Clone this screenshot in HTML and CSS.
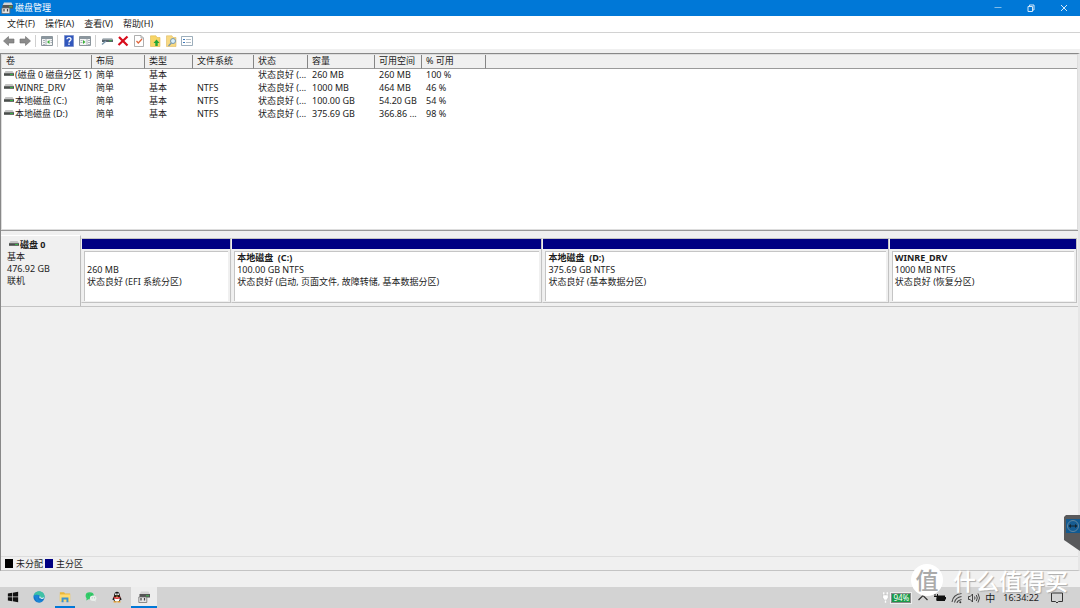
FILE: index.html
```html
<!DOCTYPE html>
<html lang="zh-CN">
<head>
<meta charset="utf-8">
<title>磁盘管理</title>
<link rel="stylesheet" href="styles.css">
</head>
<body>
<svg class="defs" aria-hidden="true">
  <symbol id="drive" viewBox="0 0 10 6"><path d="M1.500 0h7L10 2.200H0z" fill="#c4c4c4"/><path d="M0 2.200h10v2.600H0z" fill="#4a4e4c"/><path d="M6 3h3v1H6z" fill="#35b044"/></symbol>
  <symbol id="diskmgmt" viewBox="0 0 12 12"><path d="M3 .5h7.500L12 3.500H1.500z" fill="#d4d4d4"/><path d="M1.500 3H12v3.500H1.500z" fill="#555"/><path d="M8 4.300h3v1H8z" fill="#41bd52"/><path d="M.8 6h8v5.500h-8z" fill="#e4e4e4" stroke="#666" stroke-width=".7"/><path d="M3 7v2.500M6.500 7v2.500" stroke="#444" stroke-width="1.200"/></symbol>
</svg>

<header class="titlebar">
  <svg class="app-icon"><use href="#diskmgmt"/></svg>
  <h1 class="title">磁盘管理</h1>
  <div class="window-buttons">
    <button class="window-button" aria-label="最小化"><svg viewBox="0 0 8 8"><path d="M.5 3.500h7"/></svg></button>
    <button class="window-button" aria-label="还原"><svg viewBox="0 0 8 8"><path d="M1 2.500h4.500v5H1zM2.500 2.500V1H7v5H5.500"/></svg></button>
    <button class="window-button" aria-label="关闭"><svg viewBox="0 0 8 8"><path d="M1 1l6 6M7 1L1 7"/></svg></button>
  </div>
</header>

<nav class="menubar">
  <button class="menu">文件(F)</button>
  <button class="menu">操作(A)</button>
  <button class="menu">查看(V)</button>
  <button class="menu">帮助(H)</button>
</nav>

<div class="toolbar">
  <button class="tool" aria-label="后退"><svg viewBox="0 0 12 12"><path d="M.5 6L5.500 1.500V4H11v4H5.500v2.500z" fill="#8b8b8b" stroke="#6f6f6f" stroke-width=".6"/></svg></button>
  <button class="tool" aria-label="前进"><svg viewBox="0 0 12 12"><path d="M11.500 6l-5-4.500V4H1v4h5.500v2.500z" fill="#8b8b8b" stroke="#6f6f6f" stroke-width=".6"/></svg></button>
  <span class="divider"></span>
  <button class="tool" aria-label="显示控制台树"><svg viewBox="0 0 12 12"><path d="M.5 1.500h11v9H.5z" fill="#f5f5f5" stroke="#8b959c"/><path d="M1 2h10v2H1z" fill="#8c979f"/><path d="M2 5.500h2M2 7.500h2M2 9.500h2M5 4v6M9.500 5.500h1.500M9.500 7.500h1.500" stroke="#97a2aa" stroke-width=".8"/><path d="M8.500 5v4L6 7z" fill="#36b036"/></svg></button>
  <span class="divider"></span>
  <button class="tool" aria-label="帮助"><svg viewBox="0 0 12 12"><path d="M1.500.5h9v11h-9z" fill="#3157bd" stroke="#7188c7" stroke-width=".7"/><path d="M4 4.200C4 2 8 2 8 4.200c0 1.500-2 1.400-2 3.200M6 8.500v1.400" fill="none" stroke="#fff" stroke-width="1.300"/></svg></button>
  <button class="tool" aria-label="显示操作窗格"><svg viewBox="0 0 12 12"><path d="M.5 1.500h11v9H.5z" fill="#f5f5f5" stroke="#8b959c"/><path d="M1 2h10v2H1z" fill="#8c979f"/><path d="M1.500 5.500h2M1.500 7.500h2M8 4v6M9 5.500h2M9 7.500h2M9 9.500h2" stroke="#97a2aa" stroke-width=".8"/><path d="M4 5v4l2.500-2z" fill="#36b036"/></svg></button>
  <span class="divider"></span>
  <button class="tool" aria-label="重新扫描"><svg viewBox="0 0 12 12"><path d="M2 3h9l1 1.500H1z" fill="#b8c1c6"/><path d="M1 4.500h11V7H1z" fill="#56636c"/><path d="M8 5.200h3v1H8z" fill="#43aa4a"/><path d="M5 6L1 9.500" stroke="#7b98ad" stroke-width="1.500"/></svg></button>
  <button class="tool" aria-label="删除"><svg viewBox="0 0 12 12"><path d="M2 2l8.500 8.500M10.500 1.500L1.500 10" stroke="#d80d1c" stroke-width="2.200"/></svg></button>
  <button class="tool" aria-label="属性"><svg viewBox="0 0 12 12"><path d="M1.500.5h6.500l2.500 2.500v8.500h-9z" fill="#fff" stroke="#9b9b9b" stroke-width=".8"/><path d="M8 .5V3h2.500" fill="none" stroke="#9b9b9b" stroke-width=".8"/><path d="M3.500 6l1.800 2L9 4" fill="none" stroke="#e0653a" stroke-width="1.200"/></svg></button>
  <button class="tool" aria-label="上移"><svg viewBox="0 0 12 12"><path d="M1.500.8H7l1 1.700h3v9H1.500z" fill="#f8d566" stroke="#dfba50" stroke-width=".6"/><path d="M7.500 4.500L10.500 8H8.700v3H6.300V8H4.500z" fill="#21a637"/></svg></button>
  <button class="tool" aria-label="查找"><svg viewBox="0 0 12 12"><path d="M1.500.8H7l1 1.700h3v9H1.500z" fill="#f8d982" stroke="#dfba60" stroke-width=".6"/><circle cx="8" cy="6" r="2.500" fill="#d7eefa" stroke="#7798ad"/><path d="M6.300 8L3.500 11" stroke="#7798ad" stroke-width="1.300"/></svg></button>
  <button class="tool" aria-label="设置"><svg viewBox="0 0 12 12"><path d="M.5 1.500h11v9H.5z" fill="#fff" stroke="#8499aa" stroke-width=".8"/><path d="M2 4.500h2M2 7.500h2" stroke="#3a78bc"/><path d="M5 4.500h5M5 7.500h5" stroke="#b1bdc5"/></svg></button>
</div>

<main class="workspace">
  <section class="volume-list">
    <table class="volumes">
      <colgroup><col class="c-name"><col class="c-layout"><col class="c-type"><col class="c-fs"><col class="c-status"><col class="c-size"><col class="c-free"><col class="c-percent"><col></colgroup>
      <thead><tr><th>卷</th><th>布局</th><th>类型</th><th>文件系统</th><th>状态</th><th>容量</th><th>可用空间</th><th>% 可用</th><th></th></tr></thead>
      <tbody>
        <tr><td><svg class="drive"><use href="#drive"/></svg>(磁盘 0 磁盘分区 1)</td><td>简单</td><td>基本</td><td></td><td>状态良好 (...</td><td>260 MB</td><td>260 MB</td><td>100 %</td><td></td></tr>
        <tr><td><svg class="drive"><use href="#drive"/></svg>WINRE_DRV</td><td>简单</td><td>基本</td><td>NTFS</td><td>状态良好 (...</td><td>1000 MB</td><td>464 MB</td><td>46 %</td><td></td></tr>
        <tr><td><svg class="drive"><use href="#drive"/></svg>本地磁盘 (C:)</td><td>简单</td><td>基本</td><td>NTFS</td><td>状态良好 (...</td><td>100.00 GB</td><td>54.20 GB</td><td>54 %</td><td></td></tr>
        <tr><td><svg class="drive"><use href="#drive"/></svg>本地磁盘 (D:)</td><td>简单</td><td>基本</td><td>NTFS</td><td>状态良好 (...</td><td>375.69 GB</td><td>366.86 ...</td><td>98 %</td><td></td></tr>
      </tbody>
    </table>
  </section>

  <section class="disk-map">
    <div class="disk">
      <div class="disk-label">
        <strong><svg class="drive"><use href="#drive"/></svg>磁盘 0</strong>
        <span>基本</span><span>476.92 GB</span><span>联机</span>
      </div>
      <div class="partitions">
        <div class="partition"><div class="stripe"></div><div class="info"><strong></strong><span>260 MB</span><span>状态良好 (EFI 系统分区)</span></div></div>
        <div class="partition"><div class="stripe"></div><div class="info"><strong>本地磁盘&nbsp; (C:)</strong><span>100.00 GB NTFS</span><span>状态良好 (启动, 页面文件, 故障转储, 基本数据分区)</span></div></div>
        <div class="partition"><div class="stripe"></div><div class="info"><strong>本地磁盘&nbsp; (D:)</strong><span>375.69 GB NTFS</span><span>状态良好 (基本数据分区)</span></div></div>
        <div class="partition"><div class="stripe"></div><div class="info"><strong>WINRE_DRV</strong><span>1000 MB NTFS</span><span>状态良好 (恢复分区)</span></div></div>
      </div>
    </div>
  </section>
  <div class="legend"><span class="swatch unallocated"></span>未分配<span class="swatch primary"></span>主分区</div>
</main>
<div class="statusbar"></div>

<footer class="taskbar">
  <button class="task" aria-label="开始"><svg viewBox="0 0 14 14"><path d="M1 2.800l5-.8v4.500H1zM6.800 1.900L13 1v5.500H6.800zM1 7.300h5v4.600l-5-.7zM6.800 7.300H13V13l-6.200-.9z" fill="#111"/></svg></button>
  <button class="task" aria-label="Edge"><svg viewBox="0 0 14 14"><circle cx="7" cy="7" r="6.500" fill="#1673c8"/><path d="M.7 6C1.500-1.500 13-1.500 13.500 6.500c0 3.500-5 3.500-5 1.200C9 5 4 3 .7 6z" fill="#3fc2a5"/><path d="M.7 6C4 3.500 7.500 4.800 6.500 6.500c-2 3 1.500 5.500 5.500 4-2.500 4-7.500 3.500-8.500 0C2.500 7.500 2 6.500.7 6z" fill="#1a86d6"/><path d="M8.300 5.500c-2 2-.5 4.500 3.700 3.500 1-.8 1-2 1-2.500-.3 1.800-4.500 2.500-4.700-1z" fill="#d9eef2"/></svg></button>
  <button class="task running" aria-label="文件资源管理器"><svg viewBox="0 0 14 14"><path d="M1 1.500h5l1 1.500h6v9H1z" fill="#e9b638"/><path d="M1 4h12v8H1z" fill="#ffdb70"/><path d="M3 13V7.500h8V13H8.700v-3H5.300v3z" fill="#3d93cf"/></svg></button>
  <button class="task" aria-label="微信"><svg viewBox="0 0 14 14"><ellipse cx="5.500" cy="5.500" rx="4.800" ry="4" fill="#31cb68"/><path d="M2 8l-.5 3L5 9z" fill="#31cb68"/><ellipse cx="9.500" cy="8.500" rx="3.800" ry="3.200" fill="#e9efeb"/><path d="M10 11l2.500 1.500L12 10z" fill="#e9efeb"/><path d="M3.500 4.500h1M7 4.500h1M8 8h.8M10.500 8h.8" stroke="#477c58" stroke-width=".6"/></svg></button>
  <button class="task" aria-label="QQ"><svg viewBox="0 0 14 14"><path d="M3.500 6C3.500-.8 10.500-.8 10.500 6l2 4-1.500.5-1 2H4l-1-2L1.500 10z" fill="#191919"/><ellipse cx="7" cy="9.700" rx="3" ry="2.800" fill="#fff"/><path d="M3.200 6.500q3.800 2 7.600 0v1.800q-3.800 2-7.600 0z" fill="#df2929"/><circle cx="5.700" cy="3.700" r="1" fill="#fff"/><circle cx="8.300" cy="3.700" r="1" fill="#fff"/><path d="M5 5.500h4L7 6.700zM3 12h3.500v1.500H3zM7.500 12H11v1.500H7.500z" fill="#f3a322"/></svg></button>
  <button class="task running active" aria-label="磁盘管理"><svg><use href="#diskmgmt"/></svg></button>
  <div class="tray">
    <svg class="plug" viewBox="0 0 8 14"><path d="M2 1v4M6 1v4M4 9v4" stroke="#fff" stroke-width="1.500"/><path d="M.8 4h6.400v3L5.500 10h-3L.8 7z" fill="#fff" stroke="#aaa" stroke-width=".5"/></svg>
    <span class="battery">94%</span>
    <svg class="tray-icon" viewBox="0 0 12 12"><path d="M1.500 8L6 3.500 10.500 8" fill="none" stroke="#333" stroke-width="1.200"/></svg>
    <svg class="tray-icon" viewBox="0 0 12 12"><path d="M2.500 3.500H11v5.500H2.500z" fill="#111"/><path d="M11.500 5v2.500M1 2v3M3.500 2v3M0 4.500h4.500l-2 3" stroke="#111" fill="none"/></svg>
    <svg class="tray-icon" viewBox="0 0 12 12"><path d="M1 10Q2 2.500 10.500 1.500M3.500 10.500Q4.500 5.500 10.500 4.500M6 11Q6.500 8.500 10.500 7.500" fill="none" stroke="#444" stroke-width="1.100"/><circle cx="9.300" cy="10.300" r="1" fill="#333"/></svg>
    <svg class="tray-icon" viewBox="0 0 12 12"><path d="M.5 4.500h1.700L4.500 2v8L2.200 7.500H.5zM6.500 4.500q1 1.500 0 3M8.300 3q2 3 0 6M10 1.500q3 4.500 0 9" fill="none" stroke="#333" stroke-width=".9"/></svg>
    <span class="ime">中</span>
    <time class="clock">16:34:22</time>
    <svg class="notice" viewBox="0 0 14 14"><path d="M1.500 2h11v8.500h-4L7 12l-1.500-1.500h-4z" fill="none" stroke="#333"/></svg>
  </div>
</footer>

<button class="side-tab" aria-label="远程控制"><svg viewBox="0 0 16 36"><path d="M2 0h14v36L0 25V2z" fill="#58595b"/><path d="M2 4h14v14H2z" fill="#115a91"/><circle cx="9" cy="11" r="5.500" fill="#165c92" stroke="#7590a2" stroke-width=".8"/><path d="M4.500 11L7 9v1.400h4V9l2.500 2-2.500 2v-1.400H7V13z" fill="#14242f"/></svg></button>
<div class="watermark"><span class="seal">值</span><span>什么值得买</span></div>
</body>
</html>
```

FILE: styles.css
```css
* { box-sizing: border-box; }
body {
  margin: 0;
  height: 100vh;
  overflow: hidden;
  display: flex;
  flex-direction: column;
  background: #f0f0f0;
  color: #1c1c1c;
  font: 9px/12px "Noto Sans", "Noto Sans CJK SC", sans-serif;
}
button { border: 0; padding: 0; background: none; color: inherit; font: inherit; }
svg { display: block; flex: none; }
.defs { position: absolute; width: 0; height: 0; }

.titlebar { display: flex; align-items: center; height: 16px; padding-left: 1px; gap: 2px; background: #0078d7; color: #fff; flex: none; }
.app-icon { width: 12px; height: 12px; }
.title { margin: 0; font-size: 9px; font-weight: 400; }
.window-buttons { display: flex; margin-left: auto; }
.window-button { width: 33px; height: 16px; display: grid; place-items: center; }
.window-button svg { width: 8px; height: 8px; fill: none; stroke: #d4e9fa; stroke-width: 1; }
.window-button:first-child svg { stroke: #7fbcea; }

.menubar { display: flex; height: 17px; padding-left: 7px; gap: 10px; background: #fff; border-bottom: 1px solid #d2d2d2; flex: none; }
.toolbar { display: flex; align-items: center; height: 16px; padding-left: 3px; gap: 4px; background: #fff; flex: none; }
.tool svg { width: 12px; height: 12px; }
.divider { width: 1px; height: 12px; margin-right: 1px; background: #d0d0d0; }

.workspace { flex: 1; min-height: 0; display: flex; flex-direction: column; margin-top: 4px; border-top: 1px solid #888; border-left: 1px solid #888; border-right: 2px solid #e6e6e6; border-bottom: 1px solid #c4c4c4; }
.volume-list { flex: none; min-height: 175px; margin-bottom: 6px; background: #fff; border: 1px solid #ddd; border-bottom: 0; box-shadow: 0 1px #ddd, 0 2px #999; }
.volumes { width: 100%; table-layout: fixed; border-collapse: separate; border-spacing: 0; }
.c-name { width: 90px; }
.c-layout { width: 53px; }
.c-type { width: 48px; }
.c-fs { width: 61px; }
.c-status { width: 54px; }
.c-size { width: 67px; }
.c-free { width: 47px; }
.c-percent { width: 64px; }
.volumes th, .volumes td { padding: 0 0 0 4px; height: 13px; font-weight: 400; text-align: left; vertical-align: top; white-space: nowrap; }
.volumes th { height: 14px; background: #f0f0f0; border-right: 1px solid #858585; border-bottom: 1px solid #9a9a9a; }
.volumes th:last-child { border-right: 0; }
.volumes td:first-child { padding-left: 2px; }
.drive { display: inline-block; width: 10px; height: 6px; margin-right: 1px; vertical-align: 1px; }

.disk-map { flex: 1; }
.disk { display: grid; grid-template-columns: 80px 1fr; border-bottom: 1px solid #c4c4c4; }
.disk-label { display: flex; flex-direction: column; padding: 3px 6px 0; border-right: 1px solid #bbb; border-top: 1px solid #fff; }
.disk-label strong { padding-left: 2px; }
.partitions { display: grid; grid-template-columns: 150fr 311fr 346fr 188fr; padding: 3px 1px 3px 0; }
.partition { border: 1px solid #c2c2c2; border-left-color: #eee; min-width: 0; }
.stripe { height: 10px; background: #000082; }
.info { display: flex; flex-direction: column; height: 50px; margin: 2px 2px 1px; padding-left: 2px; background: #fff; border-top: 1px solid #c5c5c5; border-left: 1px solid #c5c5c5; white-space: nowrap; overflow: hidden; }
.info strong { min-height: 12px; }

.legend { display: flex; align-items: center; height: 14px; padding-left: 4px; border-top: 1px solid #ddd; flex: none; }
.swatch { width: 8px; height: 9px; margin-right: 3px; }
.unallocated { background: #000; }
.primary { background: #000082; margin-left: 2px; }
.statusbar { height: 16px; flex: none; }

.taskbar { display: flex; align-items: center; height: 21px; background: #d3d3d3; flex: none; }
.task { display: grid; place-items: center; width: 26px; height: 21px; border-bottom: 2px solid transparent; }
.task svg { width: 12px; height: 12px; }
.task.running { width: 20px; margin: 0 3px; border-bottom-color: #0078d7; }
.task.active { width: 26px; margin: 0 0 0 1px; background: #ededed; }
.tray { display: flex; align-items: center; gap: 5px; margin-left: auto; padding-right: 16px; }
.plug { width: 7px; height: 13px; }
.battery { width: 22px; height: 12px; margin-left: -4px; border: 1px solid #eee; outline: 1px solid #888; outline-offset: -2px; background: #199a48; color: #fff; font-size: 8px; line-height: 10px; text-align: center; }
.tray-icon { width: 12px; height: 12px; }
.ime { font-size: 10px; }
.clock { margin: 0 6px 0 3px; }
.notice { width: 14px; height: 14px; }

.side-tab { position: absolute; right: 0; top: 515px; width: 16px; height: 36px; }
.side-tab svg { width: 16px; height: 36px; }
.watermark { position: absolute; right: 12px; bottom: 12px; display: flex; align-items: center; gap: 10px; color: #fff; font: 500 23px/24px "Noto Sans CJK SC", sans-serif; text-shadow: 1px 1px 1px #aaa; pointer-events: none; }
.seal { width: 32px; height: 32px; border-radius: 50%; background: #fff; color: #aaa; line-height: 30px; text-align: center; text-shadow: none; }
```
